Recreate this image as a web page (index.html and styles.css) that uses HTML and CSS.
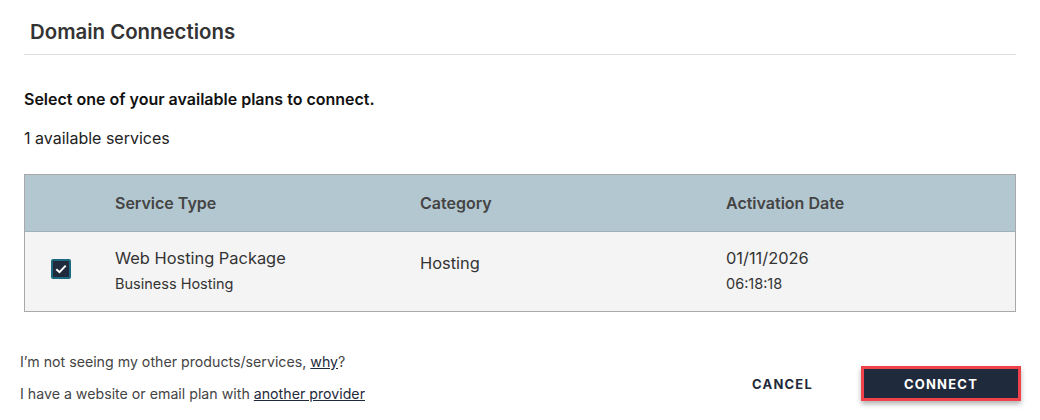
FILE: index.html
```html
<!DOCTYPE html>
<html lang="en">
<head>
    <meta charset="UTF-8">
    <title>Domain Connections</title>
    <link rel="stylesheet" href="styles.css">
</head>
<body>
    <div class="dialog">
        <header class="dialog-head">
            <h1>Domain Connections</h1>
        </header>

        <p class="lead">Select one of your available plans to connect.</p>
        <p class="count">1 available services</p>

        <div class="services">
            <div class="row head">
                <div class="cell"></div>
                <div class="cell">Service Type</div>
                <div class="cell">Category</div>
                <div class="cell">Activation Date</div>
            </div>
            <div class="row item">
                <div class="cell check">
                    <span class="box">
                        <svg width="12" height="10" viewBox="0 0 12 10"><path d="M1.3 5.2 L4.5 8.2 L10.7 1.6" fill="none" stroke="#fff" stroke-width="2"/></svg>
                    </span>
                </div>
                <div class="cell">
                    <div class="main">Web Hosting Package</div>
                    <div class="sub">Business Hosting</div>
                </div>
                <div class="cell single">
                    <div class="main">Hosting</div>
                </div>
                <div class="cell">
                    <div class="main">01/11/2026</div>
                    <div class="sub">06:18:18</div>
                </div>
            </div>
        </div>

        <footer class="dialog-foot">
            <div class="notes">
                <p>I’m not seeing my other products/services, <a href="#">why</a>?</p>
                <p>I have a website or email plan with <a href="#">another provider</a></p>
            </div>
            <div class="actions">
                <button class="btn-text">CANCEL</button>
                <button class="btn-primary">CONNECT</button>
            </div>
        </footer>
    </div>
</body>
</html>
```

FILE: styles.css
```css
body {
    margin: 0;
    font-family: Inter, "Noto Sans", sans-serif;
    color: #1a1a1a;
    background: #fff;
}
.dialog {
    width: 1040px;
    height: 420px;
    padding: 0 24px;
    box-sizing: border-box;
}
.dialog-head {
    border-bottom: 1px solid #dedede;
    padding: 20px 6px 10px;
}
.dialog-head h1 {
    margin: 0;
    font-size: 20.4px;
    font-weight: 600;
    color: #333;
    line-height: 24px;
}
.lead {
    margin: 34px 0 0;
    font-size: 16px;
    font-weight: 600;
    line-height: 20px;
    color: #111;
}
.count {
    margin: 19px 0 0;
    font-size: 16px;
    line-height: 20px;
    color: #222;
}
.services {
    margin-top: 26px;
    border: 1px solid #a9a9a9;
}
.row {
    display: grid;
    grid-template-columns: 90px 305px 306px 1fr;
}
.row.head {
    background: #b3c7d1;
    height: 56px;
    align-items: center;
    border-bottom: 1px solid #9fb2bc;
    font-size: 16px;
    font-weight: 600;
    color: #444;
}
.row.item {
    background: #f4f4f4;
    height: 79px;
    align-items: start;
    padding-top: 16px;
    box-sizing: border-box;
}
.check {
    display: flex;
    padding: 11px 0 0 26px;
}
.box {
    width: 16px;
    height: 16px;
    background: #1f2a3c;
    border: 2px solid #1d6a80;
    border-radius: 2px;
    display: flex;
    align-items: center;
    justify-content: center;
}
.single {
    padding-top: 5px;
}
.main {
    font-size: 16.4px;
    line-height: 20px;
    color: #333;
}
.sub {
    margin-top: 7px;
    font-size: 14.5px;
    line-height: 18px;
    color: #333;
}
.dialog-foot {
    display: flex;
    justify-content: space-between;
    align-items: flex-end;
    margin-top: 40px;
}
.notes {
    margin-left: -4px;
}
.notes p {
    margin: 0 0 13px;
    font-size: 14.2px;
    line-height: 19px;
    color: #444;
}
.notes a {
    color: #1f2a3c;
}
.actions {
    display: flex;
    align-items: center;
    gap: 48px;
    margin-right: -5px;
    margin-bottom: 15px;
}
.btn-text {
    background: none;
    border: 0;
    font-family: Inter, sans-serif;
    font-size: 13px;
    font-weight: 700;
    letter-spacing: 1.2px;
    color: #1f2a3c;
    padding: 0;
}
.btn-primary {
    width: 160px;
    height: 35px;
    background: #1f2a3c;
    border: 3px solid #f0424a;
    color: #fff;
    font-family: Inter, sans-serif;
    font-size: 13px;
    font-weight: 700;
    letter-spacing: 1.2px;
    box-shadow: 0 3px 5px rgba(0, 0, 0, 0.3);
}
```
